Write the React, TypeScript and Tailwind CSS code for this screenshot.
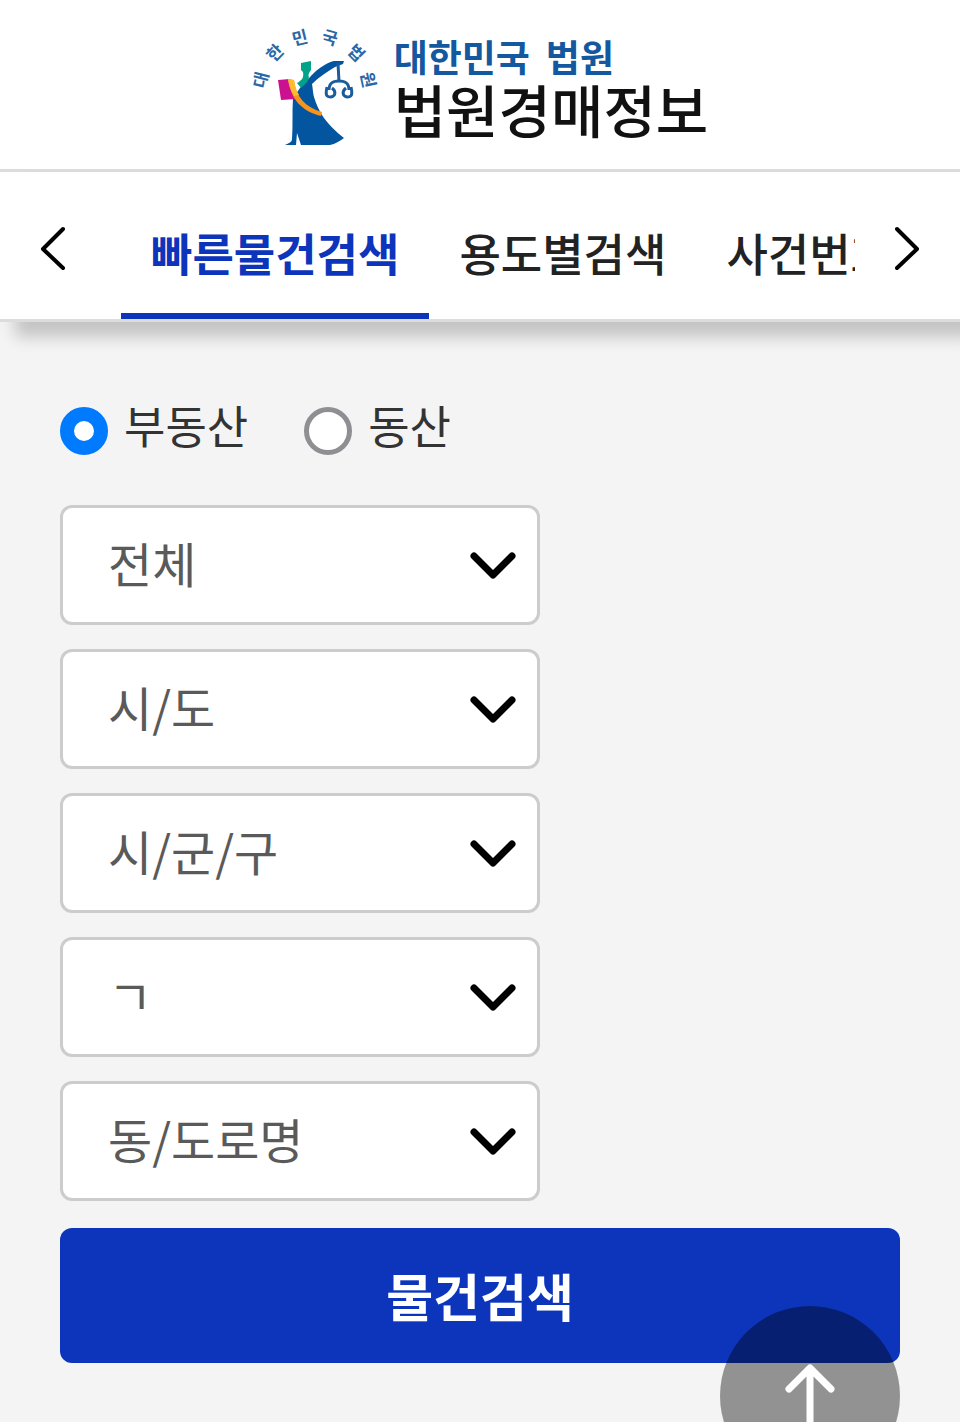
import { useState } from 'react';

const tabs = ['빠른물건검색', '용도별검색', '사건번호검색'];

const filters = [
  { id: 'court', label: '법원', value: '전체' },
  { id: 'sido', label: '시/도', value: '시/도' },
  { id: 'sigungu', label: '시/군/구', value: '시/군/구' },
  { id: 'initial', label: '초성', value: 'ㄱ' },
  { id: 'dong', label: '동/도로명', value: '동/도로명' },
];

const arcLetters = [
  { char: '대', x: 21, y: 60, angle: -76 },
  { char: '한', x: 35, y: 33, angle: -46 },
  { char: '민', x: 60, y: 18, angle: -14 },
  { char: '국', x: 90, y: 18, angle: 16 },
  { char: '법', x: 116, y: 33, angle: 45 },
  { char: '원', x: 128, y: 60, angle: 78 },
];

function Emblem() {
  return (
    <svg width="154" height="126" viewBox="0 0 154 126" aria-hidden="true">
      {arcLetters.map(({ char, x, y, angle }) => (
        <text
          key={char}
          transform={`translate(${x} ${y}) rotate(${angle})`}
          y="6"
          textAnchor="middle"
          fontSize="17"
          fontWeight="700"
          fill="#2a68a6"
        >
          {char}
        </text>
      ))}
      {/* robe and raised arm */}
      <path
        d="M60 68 C66 62 70 56 76 51 C82 46 89 42 94 41 L104 41 L103 44 L95 47 C87 52 79 57 72 64 C73 70 73 73 74 77 C76 84 79 90 82 95 C86 102 97 113 104 118 C100 121 95 124 90 125 L61 125 L57 113 L56 125 L45 125 C49 123 52 122 52 119 C53 106 52 92 53 78 Z"
        fill="#04559f"
      />
      {/* head */}
      <path d="M61 43 L71 41 L71 50 C69 53 68 54 69 58 C68 62 64 65 61 68 L57 63 C62 60 64 58 63 52 L61 50 Z" fill="#00a28a" />
      {/* book */}
      <path d="M38 60 L50 59 L56 79 L41 80 Z" fill="#cb1090" />
      <path d="M48 59 L54 60 C56 77 65 87 82 92 L81 96 C61 91 51 79 48 59 Z" fill="#f7941d" />
      <path d="M48 59 L54 60 C55 66 56 70 59 75 L54 76 C51 71 49 66 48 59 Z" fill="#fdbb30" />
      {/* scales */}
      <g fill="none" stroke="#1a5c9e" strokeWidth="3">
        <path d="M98 43 L99 62" />
        <path d="M89 70 C89 62 94 61 99 61 C104 61 109 62 109 70" />
        <path d="M87 67 C85 76 87 77 91 77 C96 76 96 71 92 68" />
        <path d="M111 67 C113 76 111 77 107 77 C102 76 102 71 106 68" />
      </g>
    </svg>
  );
}

export default function App() {
  const [activeTab, setActiveTab] = useState(tabs[0]);

  return (
    <div className="min-h-screen bg-[#f4f4f4] font-['Noto_Sans_CJK_KR',sans-serif] text-[#222]">
      {/* Logo */}
      <header className="h-[172px] bg-white border-b-3 border-[#dcdcdc] flex justify-center">
        <a href="#" className="flex items-start pt-5 pr-3 text-[#111]">
          <Emblem />
          <span className="flex flex-col pt-3">
            <span className="flex gap-4 text-[37px] leading-[48px] font-bold text-[#14589f]">
              <span>대한민국</span>
              <span>법원</span>
            </span>
            <span className="text-[57px] leading-[56px] font-medium">법원경매정보</span>
          </span>
        </a>
      </header>

      {/* Tabs */}
      <nav className="h-[150px] bg-white border-b-3 border-[#dcdcdc] flex shadow-[15px_15px_15px_rgba(0,0,0,0.2)]">
        <button type="button" aria-label="이전" className="w-[121px] pl-10 pt-1 shrink-0">
          <svg width="26" height="46" viewBox="0 0 26 46" fill="none" stroke="#000" strokeWidth="4" strokeLinecap="round" strokeLinejoin="round">
            <path d="M23 4 L3 24 L23 43" />
          </svg>
        </button>
        <div className="flex-1 flex overflow-hidden">
          {tabs.map((tab) => (
            <button
              key={tab}
              type="button"
              onClick={() => setActiveTab(tab)}
              className={
                tab === activeTab
                  ? 'px-[30px] pt-5 shrink-0 whitespace-nowrap text-[45px] font-bold text-[#0d35bb] border-b-6 border-[#0d35bb]'
                  : 'px-[30px] pt-5 shrink-0 whitespace-nowrap text-[45px] font-medium border-b-6 border-transparent'
              }
            >
              {tab}
            </button>
          ))}
        </div>
        <button type="button" aria-label="다음" className="w-[105px] pl-10 pt-1 shrink-0">
          <svg width="26" height="46" viewBox="0 0 26 46" fill="none" stroke="#000" strokeWidth="4" strokeLinecap="round" strokeLinejoin="round">
            <path d="M2 4 L22 24 L2 43" />
          </svg>
        </button>
      </nav>

      <form className="px-[60px] pt-[70px] pb-[60px]" onSubmit={(e) => e.preventDefault()}>
        {/* Property type */}
        <div className="flex gap-14 text-[45px] leading-[66px] text-[#333]">
          <label className="flex items-center gap-4">
            <input
              type="radio"
              name="kind"
              defaultChecked
              className="size-12 mt-3 appearance-none rounded-full bg-white border-5 border-[#8e8e93] checked:border-14 checked:border-[#007aff]"
            />
            부동산
          </label>
          <label className="flex items-center gap-4">
            <input
              type="radio"
              name="kind"
              className="size-12 mt-3 appearance-none rounded-full bg-white border-5 border-[#8e8e93] checked:border-14 checked:border-[#007aff]"
            />
            동산
          </label>
        </div>

        {/* Filters */}
        <div className="mt-[47px] flex flex-col gap-6">
          {filters.map(({ id, label, value }) => (
            <div key={id} className="relative w-[480px] max-w-full">
              <select
                id={id}
                aria-label={label}
                className="block w-full h-[120px] pl-[45px] pb-1.5 appearance-none bg-white border-3 border-[#ccc] rounded-xl text-[48px] text-[#5a5a5a]"
              >
                <option>{value}</option>
              </select>
              <svg
                width="46"
                height="28"
                viewBox="0 0 46 28"
                className="absolute right-6 top-[46px] pointer-events-none"
                fill="none"
                stroke="#000"
                strokeWidth="7"
                strokeLinecap="round"
                strokeLinejoin="round"
              >
                <path d="M4 5 L23 24 L42 5" />
              </svg>
            </div>
          ))}
        </div>

        <button type="submit" className="mt-[27px] w-full h-[135px] rounded-xl bg-[#0d35bb] text-[51px] font-bold text-white">
          물건검색
        </button>
      </form>

      {/* Back to top */}
      <button
        type="button"
        aria-label="맨 위로"
        className="fixed right-[60px] -bottom-16 size-[180px] rounded-full bg-black/40 flex justify-center pt-[57px]"
        onClick={() => window.scrollTo(0, 0)}
      >
        <svg width="52" height="68" viewBox="0 0 52 68" fill="none" stroke="#fff" strokeWidth="7" strokeLinecap="round" strokeLinejoin="round">
          <path d="M26 6 V64 M5 26 L26 5 L47 26" />
        </svg>
      </button>
    </div>
  );
}
